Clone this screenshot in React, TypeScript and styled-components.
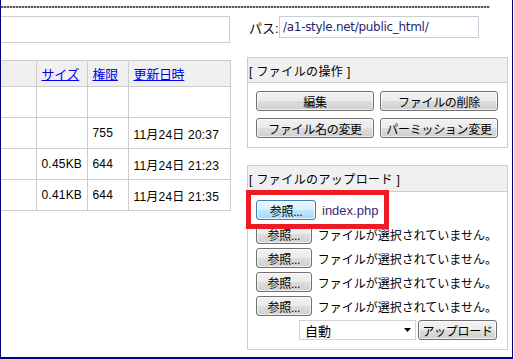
import { styled, createGlobalStyle } from "styled-components";

const GlobalStyle = createGlobalStyle`
  body {
    margin: 0;
    background: #ffffff;
    font-family: "Liberation Sans", "Noto Sans CJK JP", sans-serif;
    font-size: 12px;
    color: #000000;
  }
`;

const Frame = styled.div`
  position: relative;
  box-sizing: border-box;
  width: 513px;
  height: 359px;
  padding-top: 6px;
  border-left: 1px solid #00007f;
  border-right: 1px solid #00007f;
  border-bottom: 2px solid #00007f;
  display: flex;
  flex-direction: column;
  overflow: hidden;
`;

const DottedRule = styled.div`
  width: 489px;
  height: 2px;
  background: repeating-linear-gradient(
    to right,
    #5a5a5a 0 2px,
    #c4c4c4 2px 3px
  );
`;

const Main = styled.div`
  display: flex;
  margin-top: 8px;
`;

const LeftColumn = styled.div`
  width: 229px;
  display: flex;
  flex-direction: column;
`;

const TopBox = styled.div`
  box-sizing: border-box;
  height: 27px;
  border: 1px solid #cdcdcd;
  border-left: none;
`;

const Table = styled.table`
  margin-top: 17px;
  width: 229px;
  border-collapse: collapse;
  table-layout: fixed;
  font-size: 12px;

  th,
  td {
    border: 1px solid #cccccc;
    padding: 0 0 0 5px;
    text-align: left;
    white-space: nowrap;
    overflow: hidden;
  }
  th:first-child,
  td:first-child {
    border-left: none;
  }
`;

const HeadRow = styled.tr`
  height: 26px;
  background: #f0f0f0;

  th {
    font-weight: normal;
    font-size: 13px;
    letter-spacing: -0.3px;
  }
`;

const BodyRow = styled.tr`
  height: 31px;

  td {
    letter-spacing: 0.2px;
  }
`;

const HeadLink = styled.a`
  color: #0000ee;
  text-decoration: underline;
`;

const RightColumn = styled.div`
  width: 261px;
  margin-left: 17px;
  display: flex;
  flex-direction: column;
`;

const PathRow = styled.div`
  display: flex;
  align-items: center;
  height: 22px;
`;

const PathLabel = styled.span`
  width: 32px;
  padding-left: 2px;
  box-sizing: border-box;
  font-size: 13px;
  letter-spacing: 0;
`;

const PathInput = styled.div`
  box-sizing: border-box;
  width: 200px;
  height: 22px;
  border: 1px solid #c5cdd6;
  padding-left: 3px;
  display: flex;
  align-items: center;
  font-family: "DejaVu Sans", sans-serif;
  font-size: 12px;
  letter-spacing: -0.3px;
  color: #2a1f6e;
`;

const Panel = styled.div<{ $gap: number }>`
  margin-top: ${(p) => p.$gap}px;
  border: 1px solid #cccccc;
  display: flex;
  flex-direction: column;
`;

const PanelHeader = styled.div<{ $height: number }>`
  height: ${(p) => p.$height}px;
  background: #f0f0f0;
  border-bottom: 1px solid #cccccc;
  display: flex;
  align-items: center;
  padding-left: 1px;
  font-size: 12px;
  letter-spacing: 0.4px;
`;

const OpsGrid = styled.div`
  display: grid;
  grid-template-columns: 118px 118px;
  column-gap: 6px;
  row-gap: 7px;
  padding: 8px 0 9px 8px;
`;

const Button = styled.button<{ $focused?: boolean }>`
  box-sizing: border-box;
  height: 20px;
  margin: 0;
  padding: 0;
  border: 1px solid ${(p) => (p.$focused ? "#3c7fb1" : "#707070")};
  border-radius: 3px;
  background: ${(p) =>
    p.$focused
      ? "linear-gradient(#eaf6fd 0%, #d9f0fc 50%, #bee6fd 50%, #a7d9f5 100%)"
      : "linear-gradient(#f2f2f2 0%, #ebebeb 50%, #dddddd 50%, #cfcfcf 100%)"};
  box-shadow: inset 0 0 0 1px rgba(255, 255, 255, 0.7);
  font-family: "Liberation Sans", "Noto Sans CJK JP", sans-serif;
  font-size: 12px;
  letter-spacing: -0.3px;
  color: #000000;
  display: flex;
  align-items: center;
  justify-content: center;
`;

const UploadBody = styled.div`
  display: flex;
  flex-direction: column;
  gap: 4px;
  padding: 8px 10px 9px 8px;
`;

const FileRow = styled.div`
  display: flex;
  align-items: center;
  gap: 6px;
  height: 20px;
`;

const BrowseButton = styled(Button)`
  width: 60px;
`;

const FileName = styled.span<{ $chosen?: boolean }>`
  font-size: ${(p) => (p.$chosen ? "13px" : "12px")};
  letter-spacing: 0;
  color: ${(p) => (p.$chosen ? "#3a2a70" : "#000000")};
  white-space: nowrap;
`;

const SubmitRow = styled.div`
  display: flex;
  justify-content: flex-end;
  align-items: center;
  gap: 2px;
  height: 20px;
`;

const Select = styled.div`
  box-sizing: border-box;
  width: 117px;
  height: 20px;
  border: 1px solid #d3d3d3;
  display: flex;
  align-items: center;
  justify-content: space-between;
  padding: 0 4px 0 5px;
  font-size: 13px;
`;

const UploadButton = styled(Button)`
  width: 79px;
`;

const Highlight = styled.div`
  position: absolute;
  left: 245px;
  top: 190px;
  width: 143px;
  height: 39px;
  box-sizing: border-box;
  border: 5px solid #ed1c24;
  pointer-events: none;
`;

const rows = [
  { size: "", perm: "", date: "" },
  { size: "", perm: "755", date: "11月24日 20:37" },
  { size: "0.45KB", perm: "644", date: "11月24日 21:23" },
  { size: "0.41KB", perm: "644", date: "11月24日 21:35" },
];

const App = () => {
  return (
    <>
      <GlobalStyle />
      <Frame>
        <DottedRule />
        <Main>
          <LeftColumn>
            <TopBox />
            <Table>
              <colgroup>
                <col style={{ width: 35 }} />
                <col style={{ width: 51 }} />
                <col style={{ width: 41 }} />
                <col style={{ width: 102 }} />
              </colgroup>
              <thead>
                <HeadRow>
                  <th />
                  <th>
                    <HeadLink href="#">サイズ</HeadLink>
                  </th>
                  <th>
                    <HeadLink href="#">権限</HeadLink>
                  </th>
                  <th>
                    <HeadLink href="#">更新日時</HeadLink>
                  </th>
                </HeadRow>
              </thead>
              <tbody>
                {rows.map((r, i) => (
                  <BodyRow key={i}>
                    <td />
                    <td>{r.size}</td>
                    <td>{r.perm}</td>
                    <td>{r.date}</td>
                  </BodyRow>
                ))}
              </tbody>
            </Table>
          </LeftColumn>
          <RightColumn>
            <PathRow>
              <PathLabel>パス:</PathLabel>
              <PathInput>/a1-style.net/public_html/</PathInput>
            </PathRow>
            <Panel $gap={19}>
              <PanelHeader $height={24}>[ ファイルの操作 ]</PanelHeader>
              <OpsGrid>
                <Button>編集</Button>
                <Button>ファイルの削除</Button>
                <Button>ファイル名の変更</Button>
                <Button>パーミッション変更</Button>
              </OpsGrid>
            </Panel>
            <Panel $gap={17}>
              <PanelHeader $height={25}>[ ファイルのアップロード ]</PanelHeader>
              <UploadBody>
                <FileRow>
                  <BrowseButton $focused>参照...</BrowseButton>
                  <FileName $chosen>index.php</FileName>
                </FileRow>
                {[0, 1, 2, 3].map((i) => (
                  <FileRow key={i}>
                    <BrowseButton>参照...</BrowseButton>
                    <FileName>ファイルが選択されていません。</FileName>
                  </FileRow>
                ))}
                <SubmitRow>
                  <Select>
                    <span>自動</span>
                    <svg width="7" height="4" viewBox="0 0 7 4">
                      <path d="M0 0h7L3.5 4z" fill="#000" />
                    </svg>
                  </Select>
                  <UploadButton>アップロード</UploadButton>
                </SubmitRow>
              </UploadBody>
            </Panel>
          </RightColumn>
        </Main>
        <Highlight />
      </Frame>
    </>
  );
};

export default App;
